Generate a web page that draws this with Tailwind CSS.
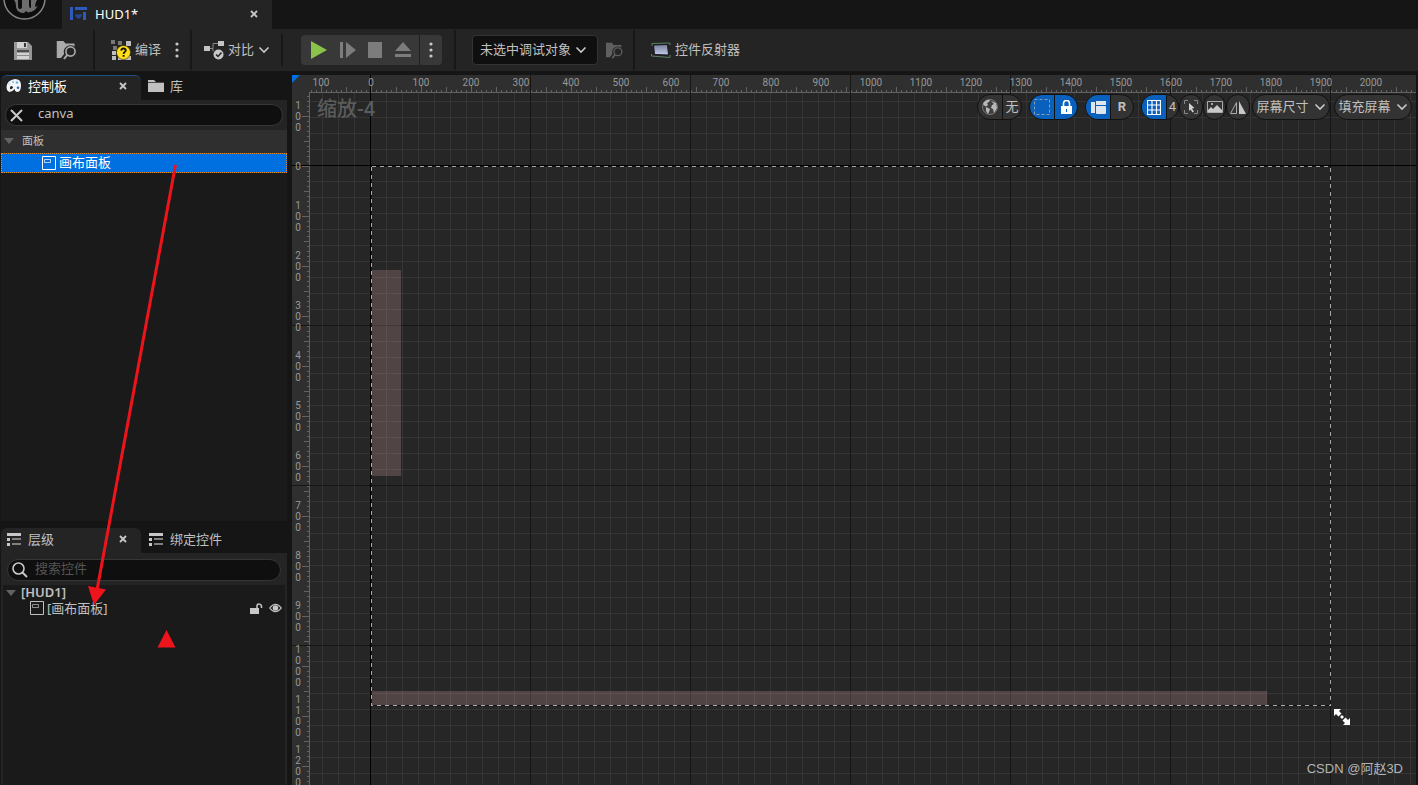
<!DOCTYPE html>
<html lang="zh-CN">
<head>
<meta charset="utf-8">
<title>HUD1</title>
<script src="https://cdn.jsdelivr.net/npm/@tailwindcss/browser@4"></script>
</head>
<body class="relative flex h-screen flex-col overflow-hidden bg-[#151515] font-['Noto_Sans','Noto_Sans_CJK_SC',sans-serif] text-[13px] leading-4 text-[#c0c0c0]">

<svg width="0" height="0" class="absolute" aria-hidden="true">
  <defs>
    <symbol id="close" viewBox="0 0 10 10"><path d="M2 2l6 6M8 2L2 8" stroke="#c8c8c8" stroke-width="1.8"/></symbol>
    <symbol id="chevron" viewBox="0 0 12 8"><path d="M1.500 1.500L6 6l4.500-4.500" fill="none" stroke="#c8c8c8" stroke-width="1.600"/></symbol>
    <symbol id="dots" viewBox="0 0 4 16"><circle cx="2" cy="2" r="1.600"/><circle cx="2" cy="8" r="1.600"/><circle cx="2" cy="14" r="1.600"/></symbol>
    <symbol id="browse" viewBox="0 0 20 20">
      <path fill="currentColor" d="M0 1h7l2 2.500h9v3A6.800 6.800 0 0 0 7.600 14L4.500 18H0z"/>
      <circle cx="14" cy="11.500" r="4.600" fill="none" stroke="currentColor" stroke-width="1.600"/>
      <path d="M10.800 14.800L7.500 19" stroke="currentColor" stroke-width="2"/>
    </symbol>
    <symbol id="list" viewBox="0 0 14 13">
      <path fill="#c8c8c8" d="M0 0h14v3H0zM0 5h3v3H0zM0 10h3v3H0z"/><path fill="#808080" d="M5 5h9v2H5zM5 10h9v2H5z"/>
    </symbol>
    <symbol id="panel" viewBox="0 0 14 14"><path d="M.5.5h13v13H.5z" fill="none" stroke="currentColor"/><path d="M2.500 3.500h6v3h-6z" fill="none" stroke="currentColor" opacity=".7"/></symbol>
  </defs>
</svg>

<header class="flex h-[29px] shrink-0">
  <div class="w-[62px] overflow-hidden">
    <svg width="50" height="24" viewBox="0 0 50 24" role="img" aria-label="Unreal Engine">
      <circle cx="24.500" cy="-1.500" r="20.500" fill="#0d0d0d" stroke="#858585" stroke-width="1.500"/>
      <path d="M14 0h4v6q0 3 2 3t2-2V0h7v6q0 2 2 2V0h6q-2 3-2 7 2 0 3-2-2 5-6 6.500l-4 1-2-1.500-2 2q-7 0-8-6 0-5-2-7z" fill="#6e6e6e"/>
    </svg>
  </div>
  <div class="flex w-[210px] items-center bg-[#242424] pr-3 pb-0.5 pl-2">
    <svg width="17" height="14" viewBox="0 0 17 14"><path fill="#2d5bbd" d="M0 0h3v13H0zM5 0h12v3H5zM13 5h3v8h-3z"/><path fill="#24488f" d="M5 8q2-2 3.500 0 1.500-2 3.500 0 0 2-3.500 4Q5 10 5 8"/></svg>
    <h1 class="ml-2 flex-1 text-white">HUD1*</h1>
    <button aria-label="关闭 HUD1" class="flex size-3 items-center justify-center"><svg width="10" height="10"><use href="#close"/></svg></button>
  </div>
</header>

<nav aria-label="工具栏" class="flex h-[42px] shrink-0 items-center bg-[#242424]">
  <div class="flex h-10 w-[95px] items-center gap-6 border-r-2 border-[#181818] pl-3.5">
    <button aria-label="保存"><svg width="18" height="19" viewBox="0 0 18 19"><path fill="#979797" d="M0 1h14l4 4v14H0z"/><path fill="#d2d2d2" d="M3 1h10v6H3zM3 12h12v6H3z"/><path fill="#383838" d="M10 2h2v4h-2z"/><path fill="#4c4c4c" d="M3 9h12v2H3z"/><path fill="#8a8a8a" d="M3 14h12v1H3z"/></svg></button>
    <button aria-label="浏览" class="text-[#aaa]"><svg width="21" height="20" viewBox="0 0 20 20"><use href="#browse"/></svg></button>
  </div>
  <div class="flex h-10 w-[97px] items-center border-r-2 border-[#181818] pl-4">
    <button class="flex items-center gap-1">
      <svg width="20" height="20" viewBox="0 0 20 20"><path fill="#777" d="M0 0h4v4H0zM7 1h4v4H7zM2 6h4v4H2z"/><path fill="#bdbdbd" d="M15 1h5v5h-5zM1 11h4v4H1zM1 16h4v4H1zM7 16h13v4H7z"/><circle cx="12.500" cy="12.500" r="7" fill="#ffdf1b" stroke="#241f00" stroke-width=".6"/><path d="M10.200 10.700q.2-2.200 2.300-2.200t2.300 1.900c0 1.500-2.200 1.600-2.200 3.500M12.600 15v1.800" fill="none" stroke="#161300" stroke-width="1.800"/></svg>
      <span class="pb-0.5">编译</span>
    </button>
    <button aria-label="编译选项" class="ml-3.5"><svg width="4" height="16" fill="#c8c8c8"><use href="#dots"/></svg></button>
  </div>
  <div class="flex h-8 w-[91px] items-center border-r-2 border-[#181818] pl-3">
    <button class="flex items-center gap-1">
      <svg width="20" height="19" viewBox="0 0 20 19"><path d="M6 7.500h3V2.500h5M9 7.500v3" fill="none" stroke="#888"/><path fill="#c4c4c4" d="M0 5h6v5H0zM14 0h6v5h-6z"/><circle cx="14.500" cy="13.500" r="5" fill="#c9c9c9"/><path d="M12 13.500l2 2 3.500-4" fill="none" stroke="#222" stroke-width="1.500"/></svg>
      <span class="pb-0.5">对比</span><svg width="12" height="8"><use href="#chevron"/></svg>
    </button>
  </div>
  <div class="flex h-10 w-[173px] items-center border-r-2 border-[#181818] pl-[18px]">
    <div class="flex h-[30px] w-[141px] items-center rounded bg-[#383838] text-[#7c7c7c]">
      <button aria-label="播放" class="ml-2.5"><svg width="16" height="18"><path d="M0 0l16 9-16 9z" fill="#8bc24a"/></svg></button>
      <button aria-label="步进" class="ml-[13px]"><svg width="16" height="16" fill="currentColor"><path d="M0 0h3v16H0zM6 0l10 8-10 8z"/></svg></button>
      <button aria-label="停止" class="ml-3"><svg width="15" height="16" fill="currentColor"><path d="M0 0h14v16H0z"/></svg></button>
      <button aria-label="弹出" class="ml-3"><svg width="16" height="16" fill="currentColor"><path d="M8 0l8 9H0zM0 12h16v3H0z"/></svg></button>
      <button aria-label="播放选项" class="ml-2 flex h-full flex-1 items-center justify-center border-l border-[#202020]"><svg width="4" height="16" fill="#c8c8c8"><use href="#dots"/></svg></button>
    </div>
  </div>
  <div class="flex h-10 w-[179px] items-center gap-2 border-r-2 border-[#181818] pl-4">
    <div class="relative">
      <select aria-label="调试对象" class="h-[30px] w-[126px] appearance-none rounded border border-[#343434] bg-[#0f0f0f] pb-0.5 pl-[7px] text-[13px]"><option>未选中调试对象</option></select>
      <svg width="12" height="8" class="pointer-events-none absolute top-[11px] right-[11px]"><use href="#chevron"/></svg>
    </div>
    <button aria-label="浏览调试对象" class="text-[#5f5f5f]"><svg width="17" height="17" viewBox="0 0 20 20"><use href="#browse"/></svg></button>
  </div>
  <button class="ml-4 flex items-center gap-1">
    <svg width="20" height="17" viewBox="0 0 20 17"><defs><linearGradient id="screen" x2="0" y2="1"><stop stop-color="#77809b"/><stop offset="1" stop-color="#c3cbea"/></linearGradient></defs><path fill="url(#screen)" stroke="#15151c" d="M2.500 3l14-.5 1 10.500-14-.5z"/><path d="M1 4V1.500l18-.5v2M.500 12v2l18.500 1.500v-2.500" fill="none" stroke="#5b8061"/></svg>
    <span class="pb-0.5">控件反射器</span>
  </button>
</nav>

<main class="flex min-h-0 flex-1 gap-[5px] pt-1 pr-0.5">
  <aside class="flex w-[287px] shrink-0 flex-col pl-px">
    <section class="flex h-[446px] shrink-0 flex-col">
      <div class="flex h-[25px] shrink-0">
        <div class="flex w-[140px] items-center rounded-t-md border-t border-[#1c4f84] bg-[#242424] pr-[13px] pb-1 pl-[5px] text-white">
          <svg width="16" height="14" viewBox="0 0 16 14"><path fill="#f2f6fa" d="M9 0q6 0 6 6 0 7-3.500 7-2.500 0-3-3-2 3-5 3-3-1-3-5Q1 1 9 0"/><path fill="#242424" d="M4 10V8.500Q4 7 5.500 7T7 8.500Q6 11 4 10"/><circle cx="12" cy="8.800" r="1.300" fill="#3269ad"/><circle cx="7" cy="3" r="1.200" fill="#9ccaf2"/><circle cx="11" cy="3.500" r="1.200" fill="#74aae2"/><circle cx="3.500" cy="5" r="1" fill="#c4def5"/></svg>
          <h2 class="ml-1.5 flex-1">控制板</h2>
          <button aria-label="关闭控制板"><svg width="10" height="10"><use href="#close"/></svg></button>
        </div>
        <button class="flex items-center gap-1.5 pb-[3px] pl-[7px]"><svg width="16" height="12"><path fill="#c0c0c0" d="M0 0h6l2 2h8v10H0z"/><path d="M0 2.500h16" stroke="#151515" stroke-width=".7"/></svg>库</button>
      </div>
      <div class="h-[30px] shrink-0 bg-[#242424] px-1 pt-1">
        <div class="flex h-[22px] items-center rounded-full border border-[#363636] bg-[#0f0f0f] pl-1">
          <button aria-label="清除搜索"><svg width="13" height="13"><path d="M1 1l11 11M12 1L1 12" stroke="#c8c8c8" stroke-width="2"/></svg></button>
          <input aria-label="搜索控制板" value="canva" class="ml-[15px] h-[18px] w-40 bg-transparent pb-1 text-[13px] leading-4 text-[#c0c0c0] outline-none">
        </div>
      </div>
      <div class="flex min-h-0 flex-1 flex-col bg-[#1a1a1a]">
        <button class="flex h-[23px] items-center gap-2 bg-[#2f2f2f] pb-px pl-[3px] text-[11px]"><svg width="10" height="6"><path fill="#626262" d="M0 0h10L5 6z"/></svg>面板</button>
        <button class="flex h-5 items-center gap-[3px] border border-dotted border-[#e08c2c] bg-[#0070e0] pl-10 text-white"><svg width="14" height="14"><use href="#panel"/></svg><span class="pb-0.5">画布面板</span></button>
      </div>
    </section>

    <section class="mt-[7px] flex min-h-0 flex-1 flex-col">
      <div class="flex h-[25px] shrink-0">
        <div class="flex w-[140px] items-center rounded-t-md bg-[#242424] pr-[13px] pb-[3px] pl-1.5">
          <svg width="14" height="13"><use href="#list"/></svg>
          <h2 class="ml-[7px] flex-1">层级</h2>
          <button aria-label="关闭层级"><svg width="10" height="10"><use href="#close"/></svg></button>
        </div>
        <button class="flex items-center gap-[7px] pb-[3px] pl-2"><svg width="14" height="13"><use href="#list"/></svg>绑定控件</button>
      </div>
      <div class="flex min-h-0 flex-1 flex-col bg-[#242424] px-0.5">
        <div class="shrink-0 px-1 pt-1.5 pb-1">
          <div class="flex h-[22px] items-center rounded-full border border-[#363636] bg-[#0f0f0f] pl-1">
            <svg width="16" height="16" viewBox="0 0 16 16"><circle cx="6.500" cy="6.500" r="5.500" fill="none" stroke="#c8c8c8" stroke-width="1.600"/><path d="M10.500 10.500l4.500 4.500" stroke="#c8c8c8" stroke-width="2"/></svg>
            <input aria-label="搜索控件" placeholder="搜索控件" class="ml-[7px] h-[18px] w-48 bg-transparent pb-1 text-[13px] leading-4 outline-none placeholder:text-[#555]">
          </div>
        </div>
        <div class="flex-1 bg-[#1a1a1a]">
          <button class="flex h-4 items-center gap-[5px] pl-[3px] font-semibold"><svg width="10" height="6"><path fill="#626262" d="M0 0h10L5 6z"/></svg><span class="pb-0.5">[HUD1]</span></button>
          <div class="flex h-4 items-center pr-[3px] pb-0.5 pl-[27px]">
            <button class="flex flex-1 items-center gap-[3px]"><svg width="14" height="14"><use href="#panel"/></svg>[画布面板]</button>
            <button aria-label="锁定"><svg width="13" height="11"><path fill="#c8c8c8" d="M0 5h9v6H0z"/><path d="M7 5V3q0-2 2-2t2.500 2v2" fill="none" stroke="#c8c8c8" stroke-width="1.500"/></svg></button>
            <button aria-label="可见性" class="ml-1.5"><svg width="13" height="10" viewBox="0 0 13 10"><path d="M.7 5Q6.500-2.500 12.300 5 6.500 12.500.7 5z" fill="none" stroke="#c8c8c8" stroke-width="1.200"/><circle cx="6.500" cy="5" r="2.800" fill="#c8c8c8"/></svg></button>
          </div>
        </div>
      </div>
    </section>
  </aside>

  <section aria-label="设计器" class="relative min-w-0 flex-1 overflow-hidden bg-[#262626] font-[Roboto,'Noto_Sans_CJK_SC',sans-serif]">
    <svg class="absolute inset-0 size-full" shape-rendering="crispEdges" aria-hidden="true">
      <defs>
        <pattern id="minor" x="14" y="10" width="16" height="16" patternUnits="userSpaceOnUse"><path d="M0 0h16v1H0zM0 0h1v16H0z" fill="#353535"/></pattern>
        <pattern id="major" x="78" y="90" width="160" height="160" patternUnits="userSpaceOnUse"><path d="M0 0h160v1H0zM0 0h1v160H0z" fill="#161616"/></pattern>
        <pattern id="tickx" x="29" y="0" width="50" height="18" patternUnits="userSpaceOnUse"><path d="M0 10h1v8H0zM25 12h1v6h-1zM5 15h1v3H5zM10 15h1v3h-1zM15 15h1v3h-1zM20 15h1v3h-1zM30 15h1v3h-1zM35 15h1v3h-1zM40 15h1v3h-1zM45 15h1v3h-1z" fill="#626262"/></pattern>
        <pattern id="ticky" x="0" y="41" width="18" height="50" patternUnits="userSpaceOnUse"><path d="M10 0h8v1h-8zM12 25h6v1h-6zM15 5h3v1h-3zM15 10h3v1h-3zM15 15h3v1h-3zM15 20h3v1h-3zM15 30h3v1h-3zM15 35h3v1h-3zM15 40h3v1h-3zM15 45h3v1h-3z" fill="#626262"/></pattern>
      </defs>
      <rect width="100%" height="100%" fill="url(#minor)"/>
      <rect width="100%" height="18" fill="#2f2f2f"/><rect width="18" height="100%" fill="#2f2f2f"/>
      <rect x="18" width="100%" height="18" fill="url(#tickx)"/><rect y="18" width="18" height="100%" fill="url(#ticky)"/>
      <rect x="17" y="17" width="100%" height="1" fill="#626262"/><rect x="17" y="17" width="1" height="100%" fill="#626262"/>
      <rect width="100%" height="100%" fill="url(#major)"/>
      <rect x="78" width="1" height="100%" fill="#000"/><rect y="90" width="100%" height="1" fill="#000"/>
      <path d="M0 0h8L0 8z" fill="#0070e0" shape-rendering="auto"/>
      <path d="M79 195h30v206H79zM79 616h896v14H79z" fill="#ffc0c0" fill-opacity=".2"/>
      <path d="M79.500 91.500h959v539h-959z" fill="none" stroke="#161616"/>
      <path d="M79.500 91.500h959v539M79.500 91.500v539h959" fill="none" stroke="#a8a8a8" stroke-dasharray="4 4"/>
      <path d="M1042 634h7l-2 2 2.500 2.500-3 3-2.500-2.500-2 2zM1058 650h-7l2-2-2.500-2.500 3-3 2.500 2.500 2-2zM1048 642l2-2 2 2-2 2z" fill="#fff" shape-rendering="auto"/>
    </svg>
    <div class="relative flex h-[18px] pt-0.5 pl-1 text-[10px] leading-3 text-[#989898]" id="rulerX"></div>
    <div class="absolute inset-y-0 left-0 w-[18px] overflow-hidden pt-4 text-[10px] leading-[11px] text-[#989898]" id="rulerY"></div>
    <p class="absolute top-5 left-[25px] text-xl leading-7 font-medium text-[#5c5c5c]">缩放-4</p>

    <div class="absolute top-[19px] right-1 flex h-[26px] items-stretch text-[13px] font-medium">
      <div class="mr-[7px] flex w-[45px] overflow-hidden rounded-full border border-[#111] bg-[#333]">
        <button aria-label="本地化" class="flex w-[25px] items-center justify-center border-r border-[#111]"><svg width="16" height="16" viewBox="0 0 16 16"><circle cx="8" cy="8" r="7.500" fill="#404040" stroke="#777"/><path fill="#b8b8b8" d="M2 3q3-3 6-2L7 3 5 4l1 2-2 1.500L2 6.500 1 5zM4 8l4 2-1 3-1 2-2-3zM9 2l5 2 1 5-3 5-1-4-2-1 1-3 2-1z"/></svg></button>
        <button class="flex-1 font-normal">无</button>
      </div>
      <div class="mr-[7px] flex w-[49px] overflow-hidden rounded-full border border-[#111] bg-[#0961bd]">
        <button aria-label="显示虚线轮廓" class="flex w-[25px] items-center justify-center border-r border-[#111]"><svg width="16" height="16"><path d="M.5.5h15v15H.5z" fill="none" stroke="#8d9cac" stroke-dasharray="3 2"/></svg></button>
        <button aria-label="遵循锁定" class="flex flex-1 items-center justify-center"><svg width="11" height="14"><path fill="#fff" d="M0 6h11v8H0z"/><path d="M2.500 6V3.500q0-3 3-3t3 3V6" fill="none" stroke="#fff" stroke-width="1.600"/><path d="M5 9h1v3H5z" fill="#0961bd"/></svg></button>
      </div>
      <div class="mr-[7px] flex w-[49px] overflow-hidden rounded-full border border-[#111] bg-[#333]">
        <button aria-label="布局模式" class="flex w-[25px] items-center justify-center border-r border-[#111] bg-[#0961bd]"><svg width="15" height="13" fill="#dfe6ee"><path d="M0 1h4v11H0zM5 0h10v4H5zM5 5h9q1 0 1 1v6q0 1-1 1H6q-1 0-1-1z"/></svg></button>
        <button class="flex-1 font-bold">R</button>
      </div>
      <div class="flex w-[38px] overflow-hidden rounded-full border border-[#111] bg-[#333]">
        <button aria-label="网格对齐" class="flex w-[25px] shrink-0 items-center justify-center border-r border-[#111] bg-[#0961bd]"><svg width="14" height="15"><path d="M.5.500h13v14H.5zM5 0v15M9.500 0v15M0 5h14M0 10h14" fill="none" stroke="#fff" stroke-width="1.200"/></svg></button>
        <button class="flex-1 font-normal">4</button>
      </div>
      <button aria-label="缩放至适合" class="flex w-6 items-center justify-center rounded-full border border-[#111] bg-[#333]"><svg width="14" height="14"><path d="M.5 4V.5H4M10 .5h3.500V4M.5 10v3.500H4M10 13.500h3.500V10" fill="none" stroke="#888"/><path fill="#d0d0d0" d="M5 3l5.500 5-2.500.5 2 3-1.500 1-2-3L5 11z"/></svg></button>
      <button aria-label="背景图像" class="flex w-[23px] items-center justify-center rounded-full border border-[#111] bg-[#333]"><svg width="16" height="12" class="shrink-0"><path d="M.5.5h15v11H.5z" fill="none" stroke="#aaa"/><path fill="#c8c8c8" d="M1 9l3-3 2 2 4-4 5 5v2H1z"/><circle cx="5" cy="3" r="1" fill="#c8c8c8"/></svg></button>
      <button aria-label="镜像" class="mr-0.5 flex w-6 items-center justify-center rounded-full border border-[#111] bg-[#333]"><svg width="16" height="13"><path d="M6.500 1.500v11h-6z" fill="none" stroke="#aaa"/><path fill="#c8c8c8" d="M9 0l7 13H9z"/></svg></button>
      <button class="mr-1 flex w-[78px] items-center justify-center gap-[5px] rounded-full border border-[#111] bg-[#333] font-normal whitespace-nowrap">屏幕尺寸<svg width="12" height="8" class="shrink-0"><use href="#chevron"/></svg></button>
      <button class="flex w-[78px] items-center justify-center gap-[5px] rounded-full border border-[#111] bg-[#333] font-normal whitespace-nowrap">填充屏幕<svg width="12" height="8" class="shrink-0"><use href="#chevron"/></svg></button>
    </div>
    <p class="absolute right-[13px] bottom-2 font-['Liberation_Sans','Noto_Sans_CJK_SC',sans-serif] text-[13px] text-[#b4b4b4]">CSDN @阿赵3D</p>
  </section>
</main>

<svg class="pointer-events-none absolute top-0 left-0" width="200" height="660" aria-hidden="true">
  <path d="M175.500 165L97 590" stroke="#ee141c" stroke-width="3"/>
  <path d="M88 586l18 3.500L94 605zM166.500 630l9 17.500h-18z" fill="#ee141c"/>
</svg>

<script>
  // Ruler labels: one 50px cell per 100 canvas units, starting at -100.
  const rx = document.getElementById('rulerX'), ry = document.getElementById('rulerY');
  for (let v = -100; v <= 2000; v += 100) {
    const c = document.createElement('span');
    c.className = 'w-[50px] shrink-0 text-center';
    c.textContent = Math.abs(v);
    rx.append(c);
  }
  for (let v = -100; v <= 1200; v += 100) {
    const c = document.createElement('div');
    c.className = 'flex h-[50px] w-3 flex-col items-center justify-center';
    for (const d of String(Math.abs(v))) {
      const s = document.createElement('span');
      s.textContent = d;
      c.append(s);
    }
    ry.append(c);
  }
</script>
</body>
</html>
